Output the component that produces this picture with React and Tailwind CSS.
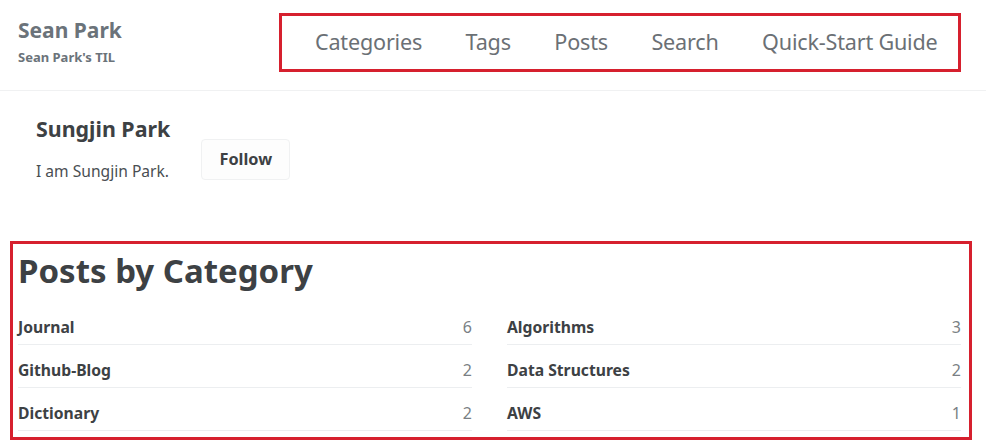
import React from 'react';

const navLinks = ['Categories', 'Tags', 'Posts', 'Search', 'Quick-Start Guide'];

const leftCats = [
    { name: 'Journal', count: 6 },
    { name: 'Github-Blog', count: 2 },
    { name: 'Dictionary', count: 2 },
];

const rightCats = [
    { name: 'Algorithms', count: 3 },
    { name: 'Data Structures', count: 2 },
    { name: 'AWS', count: 1 },
];

function CategoryList({ items }) {
    return (
        <ul className="flex-1">
            {items.map((c) => (
                <li key={c.name} className="flex items-start justify-between h-[43px] pt-[14px] leading-[22px] border-b border-[#eceef0]">
                    <span className="font-bold text-[15.7px] text-[#3d4144]">{c.name}</span>
                    <span className="text-[16px] text-[#7a7f84]">{c.count}</span>
                </li>
            ))}
        </ul>
    );
}

export default function App() {
    return (
        <div className="w-[986px] h-[448px] bg-white overflow-hidden" style={{ fontFamily: '"Noto Sans", "Open Sans", sans-serif' }}>
            {/* Masthead */}
            <header className="flex items-start justify-between h-[91px] border-b border-[#f0f1f2] pl-[18px] pr-[25px]">
                <div className="pt-[16px]">
                    <div className="text-[21px] font-bold leading-[29px] text-[#6b737a]">Sean Park</div>
                    <div className="text-[13px] font-bold leading-[17px] mt-[4px] text-[#6b737a]">Sean Park's TIL</div>
                </div>
                <nav className="mt-[13px] h-[59px] w-[682px] border-[3px] border-[#d6202e] flex items-center pl-[33px] gap-[43.5px]">
                    {navLinks.map((l) => (
                        <a key={l} className="text-[21.6px] text-[#6b7075] tracking-[-0.2px]">{l}</a>
                    ))}
                </nav>
            </header>

            {/* Author */}
            <section className="flex items-start pl-[36px] pt-[23px] gap-[31px] h-[150px]">
                <div>
                    <h2 className="text-[21.4px] font-bold leading-[29px] text-[#3d4144]">Sungjin Park</h2>
                    <p className="text-[15.6px] text-[#494e52] mt-[17px]">I am Sungjin Park.</p>
                </div>
                <button className="mt-[25px] w-[89px] h-[41px] rounded-[4px] border border-[#f0f1f2] bg-[#fdfdfd] text-[16.3px] font-bold text-[#3d4144]">
                    Follow
                </button>
            </section>

            {/* Posts by category */}
            <section className="mx-[10px] w-[962px] h-[199px] border-[3px] border-[#d6202e] px-[5px]">
                <h1 className="text-[33px] font-bold leading-[44px] mt-[5px] text-[#3d4144]">Posts by Category</h1>
                <div className="flex gap-[35px] mt-[9px] pr-[3px]">
                    <CategoryList items={leftCats} />
                    <CategoryList items={rightCats} />
                </div>
            </section>
        </div>
    );
}
